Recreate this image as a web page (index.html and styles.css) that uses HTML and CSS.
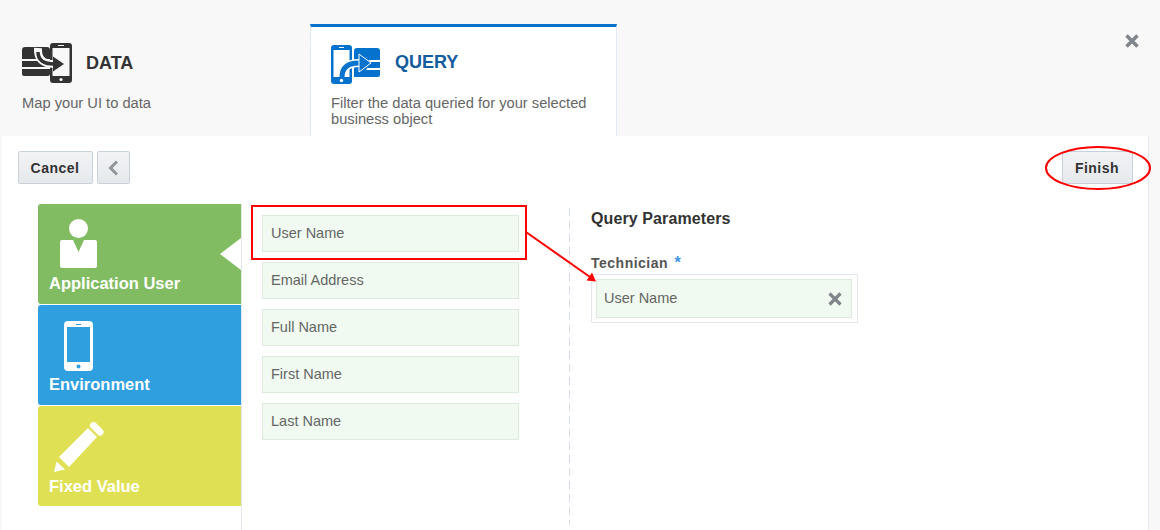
FILE: index.html
```html
<!DOCTYPE HTML>
<html>
<head>
<meta http-equiv="Content-Type" content="text/html; charset=utf-8" />
<title>Query</title>
<link rel="stylesheet" href="styles.css">
</head>
<body>
	<div class="steps">
		<div class="step">
			<div class="stepHead">
				<svg class="stepIcon" width="50" height="41" viewBox="0 0 50 41">
					<path d="M0 7q0-3 3-3h22q3 0 3 3v9H0zM0 18h28v6H0zM0 26h28v5q0 2-2 2H2q-2 0-2-2z" fill="#333"/>
					<rect x="28" y="0" width="22" height="40" rx="3" fill="#333"/>
					<rect x="30.500" y="5" width="17" height="28" fill="#f8f8f8"/>
					<circle cx="39" cy="36.500" r="1.600" fill="#f8f8f8"/>
					<rect x="36" y="2" width="6" height="1" fill="#f8f8f8"/>
					<path d="M16 5q-1 16 16 16" fill="none" stroke="#f8f8f8" stroke-width="8"/>
					<path d="M16 9q0 12 16 12" fill="none" stroke="#333" stroke-width="3.500"/>
					<path d="M31 13.500 42 21 31 28.500z" fill="#333"/>
				</svg>
				<span class="stepName">DATA</span>
			</div>
			<p class="stepDesc">Map your UI to data</p>
		</div>
		<div class="step stepOn">
			<div class="stepHead">
				<svg class="stepIcon" width="50" height="40" viewBox="0 0 50 40">
					<rect x="0" y="0" width="21" height="39" rx="3" fill="#0572ce"/>
					<rect x="2.500" y="5" width="16" height="27" fill="#fff"/>
					<circle cx="10.500" cy="35.500" r="1.700" fill="#fff"/>
					<rect x="8" y="2" width="5" height="1" fill="#fff"/>
					<path d="M23 6q0-3 3-3h20q3 0 3 3v9H37l-2-3H23zM37 17h12v6H37zM37 25h12v5q0 2-2 2H23V25h12z" fill="#0572ce"/>
					<path d="M23 12h12l5 6-5 7H23z" fill="#0572ce"/>
					<path d="M11 32q0-14 17-14" fill="none" stroke="#fff" stroke-width="8"/>
					<path d="M11 32q0-14 17-14" fill="none" stroke="#0572ce" stroke-width="5"/>
					<path d="M28 9 40 18 28 27z" fill="#0572ce" stroke="#fff" stroke-width="1"/>
				</svg>
				<span class="stepName">QUERY</span>
			</div>
			<p class="stepDesc">Filter the data queried for your selected business object</p>
		</div>
		<a class="closeBtn" href="#">
			<svg width="16" height="16" viewBox="0 0 16 16"><path d="M2.500 2.500l11 11M13.500 2.500l-11 11" stroke="#80868c" stroke-width="3.600"/></svg>
		</a>
	</div>

	<div class="panel">
		<div class="toolbar">
			<a class="btn btnCancel" href="#">Cancel</a>
			<a class="btn btnBack" href="#">
				<svg width="11" height="16" viewBox="0 0 11 16"><path d="M9 1.500 2.500 8 9 14.500" fill="none" stroke="#90959b" stroke-width="3"/></svg>
			</a>
			<a class="btn btnFinish" href="#">Finish</a>
		</div>
		<div class="content">
			<div class="cats">
				<div class="cat catUser">
					<svg class="catIcon" width="37" height="49" viewBox="0 0 37 49">
						<circle cx="18.500" cy="9.500" r="9.500" fill="#fff"/>
						<path d="M2 21h11l5.500 12L24 21h11q2 0 2 2v24q0 2-2 2H2q-2 0-2-2V23q0-2 2-2z" fill="#fff"/>
					</svg>
					<span class="catName">Application User</span>
				</div>
				<div class="cat catEnv">
					<svg class="catIcon" width="29" height="50" viewBox="0 0 29 50">
						<rect x="0" y="0" width="29" height="50" rx="4" fill="#fff"/>
						<rect x="3" y="6" width="23" height="35" fill="#309fdf"/>
						<rect x="12" y="3" width="5" height="1" fill="#309fdf"/>
						<circle cx="14.500" cy="45.500" r="2" fill="#309fdf"/>
					</svg>
					<span class="catName">Environment</span>
				</div>
				<div class="cat catFixed">
					<svg class="catIcon" width="50" height="50" viewBox="0 0 50 50">
						<path d="M5 35 34 6 43 15 15 45z" fill="#fff"/>
						<path d="M39.500 3.500 46 10" stroke="#fff" stroke-width="7" stroke-linecap="round"/>
						<path d="M2.500 39.500 11 47.500 0 50z" fill="#fff"/>
					</svg>
					<span class="catName">Fixed Value</span>
				</div>
			</div>
			<div class="fields">
				<div class="field">User Name</div>
				<div class="field">Email Address</div>
				<div class="field">Full Name</div>
				<div class="field">First Name</div>
				<div class="field">Last Name</div>
			</div>
			<div class="divider"></div>
			<div class="params">
				<h3 class="paramsTitle">Query Parameters</h3>
				<label class="paramLabel">Technician <span class="req">*</span></label>
				<div class="dropBox">
					<div class="dropItem">
						User Name
						<svg width="14" height="14" viewBox="0 0 14 14"><path d="M1.500 1.500l11 11M12.500 1.500l-11 11" stroke="#80868c" stroke-width="3.200"/></svg>
					</div>
				</div>
			</div>
		</div>
	</div>

	<!-- red marks drawn on top of the screen -->
	<svg class="marks" width="1160" height="530" viewBox="0 0 1160 530">
		<rect x="252" y="206" width="274" height="53" fill="none" stroke="#f00" stroke-width="2"/>
		<path d="M526 232 590 277" stroke="#f00" stroke-width="2"/>
		<path d="M596 281.500 586.500 280.500 592 272.500z" fill="#f00"/>
		<ellipse cx="1098" cy="168" rx="52" ry="21" fill="none" stroke="#f00" stroke-width="2"/>
	</svg>
</body>
</html>
```
FILE: styles.css
```css
* {
	margin: 0;
	padding: 0;
	box-sizing: border-box;
}

html, body {
	height: 530px;
	overflow: hidden;
}

body {
	position: relative;
	background: #f8f8f8;
	font-family: "Liberation Sans", Arial, sans-serif;
	font-size: 14px;
	color: #666;
}

a {
	text-decoration: none;
}

/****上方步骤*****/
.steps {
	display: flex;
	height: 136px;
	background: repeating-linear-gradient(135deg, #f6f6f6 0, #f6f6f6 1px, #f9f9f9 1px, #f9f9f9 3px);
}

.step {
	width: 310px;
	padding: 43px 0 0 22px;
}

.step.stepOn {
	width: 307px;
	margin-top: 24px;
	padding: 17px 0 0 20px;
	background: #fff;
	border-top: 3px solid #0572ce;
	border-left: 1px solid #e3e9f1;
	border-right: 1px solid #e3e9f1;
}

.stepHead {
	display: flex;
	align-items: center;
	height: 41px;
}

.stepName {
	margin-left: 14px;
	font-size: 18px;
	font-weight: bold;
	color: #333;
}

.stepOn .stepName {
	margin-bottom: 4px;
	color: #145c9e;
}

.stepDesc {
	margin-top: 11px;
	font-size: 14.700px;
	line-height: 16px;
	color: #666;
}

.stepOn .stepDesc {
	margin-top: 10px;
	width: 275px;
}

.closeBtn {
	margin: 33px 0 0 507px;
	height: 16px;
}

/****主面板*****/
.panel {
	width: 1147px;
	height: 394px;
	margin-left: 2px;
	background: #fff;
	border-right: 1px solid #e3e9f1;
}

.toolbar {
	display: flex;
	height: 68px;
	padding: 15px 15px 0 16px;
}

.btn {
	display: flex;
	align-items: center;
	justify-content: center;
	height: 33px;
	padding-right: 1px;
	background: linear-gradient(#f1f3f5, #e6e9ec);
	border: 1px solid #c9d1da;
	border-radius: 2px;
	font-size: 14px;
	font-weight: bold;
	letter-spacing: 0.5px;
	color: #333;
}

.btnCancel {
	width: 75px;
}

.btnBack {
	width: 33px;
	margin-left: 4px;
}

.btnFinish {
	width: 71px;
	margin-left: auto;
}

.content {
	display: flex;
	height: 326px;
	padding-left: 36px;
}

/****左侧分类*****/
.cats {
	width: 204px;
	border-right: 1px solid #e3e8ef;
}

.cat {
	position: relative;
	height: 100px;
	margin-bottom: 1px;
	border-radius: 3px 0 0 3px;
	color: #fff;
}

.catIcon {
	display: block;
}

.catName {
	position: absolute;
	left: 11px;
	bottom: 12px;
	font-size: 16.500px;
	font-weight: bold;
	line-height: 18px;
}

.catUser {
	background: #82bc62;
	padding: 15px 0 0 22px;
}

.catUser::after {
	content: "";
	position: absolute;
	right: 0;
	top: 34px;
	border-top: 16.500px solid transparent;
	border-bottom: 16.500px solid transparent;
	border-right: 21px solid #fff;
}

.catEnv {
	background: #309fdf;
	padding: 16px 0 0 26px;
}

.catFixed {
	background: #e0e055;
	padding: 16px 0 0 16px;
}

.catFixed .catName {
	bottom: 11px;
}

/****中间字段*****/
.fields {
	width: 327px;
	padding: 11px 0 0 20px;
}

.field {
	display: flex;
	align-items: center;
	width: 257px;
	height: 37px;
	margin-bottom: 10px;
	padding: 0 0 2px 8px;
	background: #f0faf0;
	border: 1px solid #dcebdc;
	font-size: 14.500px;
	color: #666;
}

.divider {
	width: 1px;
	height: 317px;
	margin-top: 4px;
	background: repeating-linear-gradient(#d6dde6 0, #d6dde6 8px, #fff 8px, #fff 13px);
}

/****右侧参数*****/
.params {
	padding: 6px 0 0 21px;
}

.paramsTitle {
	font-size: 16px;
	line-height: 18px;
	font-weight: bold;
	letter-spacing: 0.1px;
	color: #333;
}

.paramLabel {
	display: block;
	margin-top: 26px;
	font-size: 14px;
	line-height: 18px;
	font-weight: bold;
	letter-spacing: 0.5px;
	color: #555;
}

.req {
	margin-left: 2px;
	color: #3b94e0;
	font-size: 16px;
}

.dropBox {
	width: 267px;
	height: 49px;
	margin-top: 2px;
	padding: 4px 5px 4px 4px;
	border: 1px solid #e3e8ef;
}

.dropItem {
	display: flex;
	align-items: center;
	justify-content: space-between;
	height: 39px;
	padding: 0 9px 2px 7px;
	background: #f0faf0;
	border: 1px solid #dcebdc;
	font-size: 14.500px;
	color: #666;
}

.dropItem svg {
	margin-top: 2px;
}

.marks {
	position: absolute;
	left: 0;
	top: 0;
	pointer-events: none;
}
```
